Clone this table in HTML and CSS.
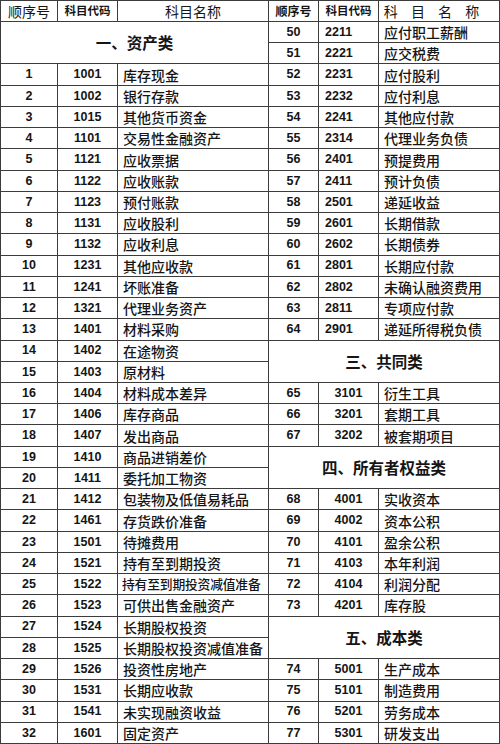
FILE: index.html
```html
<!DOCTYPE html>
<html lang="zh-CN">
<head>
<meta charset="utf-8">
<title>会计科目表</title>
<link rel="stylesheet" href="styles.css">
</head>
<body>
<div class="sheet">
  <div class="c hd">顺序号</div><div class="c hd b sm">科目代码</div><div class="c hd">科目名称</div>
  <div class="c hd b sm2">顺序号</div><div class="c hd b sm">科目代码</div><div class="c hd sp">科 目 名 称</div>

  <div class="c sec">一、资产类</div>
  <div class="c n">50</div><div class="c n l">2211</div><div class="c t">应付职工薪酬</div>
  <div class="c n">51</div><div class="c n l">2221</div><div class="c t">应交税费</div>

  <div class="c n">1</div><div class="c n">1001</div><div class="c t">库存现金</div>
  <div class="c n">52</div><div class="c n l">2231</div><div class="c t">应付股利</div>
  <div class="c n">2</div><div class="c n">1002</div><div class="c t">银行存款</div>
  <div class="c n">53</div><div class="c n l">2232</div><div class="c t">应付利息</div>
  <div class="c n">3</div><div class="c n">1015</div><div class="c t">其他货币资金</div>
  <div class="c n">54</div><div class="c n l">2241</div><div class="c t">其他应付款</div>
  <div class="c n">4</div><div class="c n">1101</div><div class="c t">交易性金融资产</div>
  <div class="c n">55</div><div class="c n l">2314</div><div class="c t">代理业务负债</div>
  <div class="c n">5</div><div class="c n">1121</div><div class="c t">应收票据</div>
  <div class="c n">56</div><div class="c n l">2401</div><div class="c t">预提费用</div>
  <div class="c n">6</div><div class="c n">1122</div><div class="c t">应收账款</div>
  <div class="c n">57</div><div class="c n l">2411</div><div class="c t">预计负债</div>
  <div class="c n">7</div><div class="c n">1123</div><div class="c t">预付账款</div>
  <div class="c n">58</div><div class="c n l">2501</div><div class="c t">递延收益</div>
  <div class="c n">8</div><div class="c n">1131</div><div class="c t">应收股利</div>
  <div class="c n">59</div><div class="c n l">2601</div><div class="c t">长期借款</div>
  <div class="c n">9</div><div class="c n">1132</div><div class="c t">应收利息</div>
  <div class="c n">60</div><div class="c n l">2602</div><div class="c t">长期债券</div>
  <div class="c n">10</div><div class="c n">1231</div><div class="c t">其他应收款</div>
  <div class="c n">61</div><div class="c n l">2801</div><div class="c t">长期应付款</div>
  <div class="c n">11</div><div class="c n">1241</div><div class="c t">坏账准备</div>
  <div class="c n">62</div><div class="c n l">2802</div><div class="c t">未确认融资费用</div>
  <div class="c n">12</div><div class="c n">1321</div><div class="c t">代理业务资产</div>
  <div class="c n">63</div><div class="c n l">2811</div><div class="c t">专项应付款</div>
  <div class="c n">13</div><div class="c n">1401</div><div class="c t">材料采购</div>
  <div class="c n">64</div><div class="c n l">2901</div><div class="c t">递延所得税负债</div>

  <div class="c n">14</div><div class="c n">1402</div><div class="c t">在途物资</div>
  <div class="c sec">三、共同类</div>
  <div class="c n">15</div><div class="c n">1403</div><div class="c t">原材料</div>

  <div class="c n">16</div><div class="c n">1404</div><div class="c t">材料成本差异</div>
  <div class="c n">65</div><div class="c n">3101</div><div class="c t">衍生工具</div>
  <div class="c n">17</div><div class="c n">1406</div><div class="c t">库存商品</div>
  <div class="c n">66</div><div class="c n">3201</div><div class="c t">套期工具</div>
  <div class="c n">18</div><div class="c n">1407</div><div class="c t">发出商品</div>
  <div class="c n">67</div><div class="c n">3202</div><div class="c t">被套期项目</div>

  <div class="c n">19</div><div class="c n">1410</div><div class="c t">商品进销差价</div>
  <div class="c sec">四、所有者权益类</div>
  <div class="c n">20</div><div class="c n">1411</div><div class="c t">委托加工物资</div>

  <div class="c n">21</div><div class="c n">1412</div><div class="c t">包装物及低值易耗品</div>
  <div class="c n">68</div><div class="c n">4001</div><div class="c t">实收资本</div>
  <div class="c n">22</div><div class="c n">1461</div><div class="c t">存货跌价准备</div>
  <div class="c n">69</div><div class="c n">4002</div><div class="c t">资本公积</div>
  <div class="c n">23</div><div class="c n">1501</div><div class="c t">待摊费用</div>
  <div class="c n">70</div><div class="c n">4101</div><div class="c t">盈余公积</div>
  <div class="c n">24</div><div class="c n">1521</div><div class="c t">持有至到期投资</div>
  <div class="c n">71</div><div class="c n">4103</div><div class="c t">本年利润</div>
  <div class="c n">25</div><div class="c n">1522</div><div class="c t tight">持有至到期投资减值准备</div>
  <div class="c n">72</div><div class="c n">4104</div><div class="c t">利润分配</div>
  <div class="c n">26</div><div class="c n">1523</div><div class="c t">可供出售金融资产</div>
  <div class="c n">73</div><div class="c n">4201</div><div class="c t">库存股</div>

  <div class="c n">27</div><div class="c n">1524</div><div class="c t">长期股权投资</div>
  <div class="c sec">五、成本类</div>
  <div class="c n">28</div><div class="c n">1525</div><div class="c t">长期股权投资减值准备</div>

  <div class="c n">29</div><div class="c n">1526</div><div class="c t">投资性房地产</div>
  <div class="c n">74</div><div class="c n">5001</div><div class="c t">生产成本</div>
  <div class="c n">30</div><div class="c n">1531</div><div class="c t">长期应收款</div>
  <div class="c n">75</div><div class="c n">5101</div><div class="c t">制造费用</div>
  <div class="c n">31</div><div class="c n">1541</div><div class="c t">未实现融资收益</div>
  <div class="c n">76</div><div class="c n">5201</div><div class="c t">劳务成本</div>
  <div class="c n">32</div><div class="c n">1601</div><div class="c t">固定资产</div>
  <div class="c n">77</div><div class="c n">5301</div><div class="c t">研发支出</div>
</div>
</body>
</html>
```

FILE: styles.css
```css
html, body {
  margin: 0;
  padding: 0;
  background: #ffffff;
}

.sheet {
  width: 500px;
  height: 744px;
  box-sizing: border-box;
  padding: 1px;
  background: #3c3c3c;
  display: grid;
  grid-template-columns: 56px 59px 150px 49px 59px 120px;
  grid-template-rows: 20px repeat(34, 1fr);
  gap: 1px;
  font-family: "Noto Sans CJK SC", "Liberation Sans", sans-serif;
  color: #151515;
}

.c {
  background: #ffffff;
  display: flex;
  align-items: center;
  justify-content: center;
  white-space: nowrap;
  overflow: visible;
  min-width: 0;
  line-height: 1;
}

.hd {
  font-size: 14px;
  font-weight: 400;
}

.hd.b {
  font-weight: 700;
}

.hd.sm {
  font-size: 11.5px;
}

.hd.sm2 {
  font-size: 12px;
}

.hd.sp {
  letter-spacing: 5px;
  padding-right: 10px;
}

.sec {
  grid-column: span 3;
  grid-row: span 2;
  font-size: 15.5px;
  font-weight: 700;
}

.n {
  font-family: "Liberation Sans", Arial, sans-serif;
  font-weight: 700;
  font-size: 12.5px;
}

.n.l {
  justify-content: flex-start;
  padding-left: 6px;
}

.t {
  justify-content: flex-start;
  padding-left: 5px;
  font-size: 14px;
  font-weight: 500;
}

.t.tight {
  font-size: 12.8px;
  letter-spacing: -0.2px;
  padding-left: 4px;
}
```
